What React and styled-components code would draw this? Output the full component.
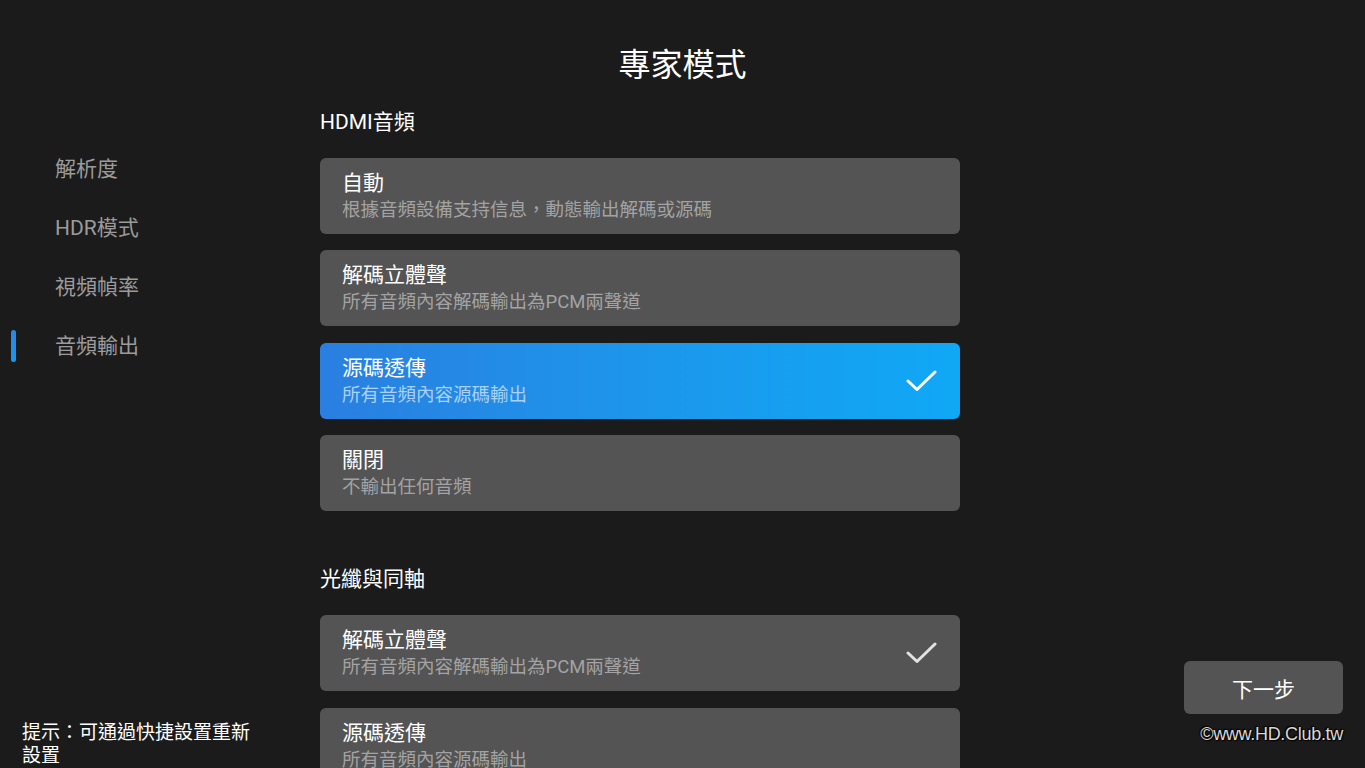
import React from "react";
import styled, { createGlobalStyle } from "styled-components";

const Global = createGlobalStyle`
  html, body { margin: 0; padding: 0; background: #1b1b1b; }
  body { font-family: Roboto, "Noto Sans CJK TC", "Noto Sans", sans-serif; }
  * { box-sizing: border-box; }
`;

const Page = styled.div`
  width: 1365px;
  height: 768px;
  overflow: hidden;
  background: #1b1b1b;
  display: flex;
  flex-direction: column;
  color: #fff;
`;

const Title = styled.h1`
  flex: none;
  margin: 0;
  padding-top: 44px;
  height: 86px;
  line-height: 42px;
  font-size: 32px;
  font-weight: 400;
  text-align: center;
  color: #fff;
`;

const Main = styled.div`
  flex: 1;
  min-height: 0;
  display: grid;
  grid-template-columns: 320px 640px 1fr;
  grid-template-rows: minmax(0, 1fr);
`;

const Sidebar = styled.nav`
  display: flex;
  flex-direction: column;
  padding-top: 54px;
  padding-bottom: 1px;
  min-height: 0;
`;

const NavItem = styled.div`
  position: relative;
  height: 59px;
  line-height: 59px;
  padding-left: 55px;
  font-size: 21px;
  color: #9b9b9b;
  &::before {
    content: "";
    display: ${(p) => (p.$active ? "block" : "none")};
    position: absolute;
    left: 11px;
    top: 13px;
    width: 5px;
    height: 32px;
    border-radius: 3px;
    background: linear-gradient(180deg, #2a86e6, #1598f0);
  }
`;

const Hint = styled.div`
  margin-top: auto;
  padding-left: 22px;
  width: 262px;
  font-size: 19px;
  line-height: 23px;
  color: #fff;
`;

const Content = styled.div`
  padding-top: 22px;
  display: flex;
  flex-direction: column;
  min-height: 0;
  overflow: hidden;
`;

const SectionHeader = styled.div`
  flex: none;
  height: 28px;
  line-height: 28px;
  font-size: 21px;
  color: #fff;
  margin-bottom: 22px;
  margin-top: ${(p) => (p.$gap ? "54px" : "0")};
`;

const CardList = styled.div`
  flex: none;
  display: flex;
  flex-direction: column;
  gap: 16.4px;
`;

const Card = styled.div`
  flex: none;
  height: 76px;
  border-radius: 6px;
  padding: 11px 22px 0 22px;
  display: flex;
  align-items: flex-start;
  justify-content: space-between;
  background: ${(p) =>
    p.$selected ? "linear-gradient(90deg, #2a7fe0 0%, #1b98ec 55%, #10a8f6 100%)" : "#545454"};
`;

const CardText = styled.div`
  display: flex;
  flex-direction: column;
`;

const CardTitle = styled.div`
  font-size: 21px;
  line-height: 28px;
  color: #fff;
`;

const CardSub = styled.div`
  font-size: 18.5px;
  line-height: 26px;
  color: ${(p) => (p.$selected ? "#a9d2f6" : "#a3a3a3")};
  white-space: nowrap;
`;

const Check = styled.svg`
  width: 31px;
  height: 22px;
  margin-top: 16px;
  margin-right: 1px;
  flex: none;
`;

const Right = styled.div`
  display: flex;
  flex-direction: column;
  justify-content: flex-end;
  align-items: flex-end;
  padding: 0 22px 24px 0;
  min-height: 0;
`;

const NextButton = styled.button`
  width: 159px;
  height: 53px;
  border: none;
  border-radius: 6px;
  background: #545454;
  color: #fff;
  font-family: inherit;
  font-size: 21px;
  margin-bottom: 10px;
`;

const Watermark = styled.div`
  font-family: "Liberation Sans", Arial, sans-serif;
  font-size: 18px;
  line-height: 20px;
  letter-spacing: -0.3px;
  color: #d8d8d8;
  text-shadow: 0 0 2px #000, 1px 1px 1px #000, -1px -1px 1px #000;
`;

const CheckIcon = ({ color }) => (
  <Check viewBox="0 0 31 22">
    <path d="M2 11 L11 19.5 L29 2" fill="none" stroke={color} strokeWidth="3" strokeLinecap="round" strokeLinejoin="round" />
  </Check>
);

const hdmi = [
  { t: "自動", s: "根據音頻設備支持信息，動態輸出解碼或源碼" },
  { t: "解碼立體聲", s: "所有音頻內容解碼輸出為PCM兩聲道" },
  { t: "源碼透傳", s: "所有音頻內容源碼輸出", selected: true, check: true },
  { t: "關閉", s: "不輸出任何音頻" },
];

const optical = [
  { t: "解碼立體聲", s: "所有音頻內容解碼輸出為PCM兩聲道", check: true },
  { t: "源碼透傳", s: "所有音頻內容源碼輸出" },
];

const nav = ["解析度", "HDR模式", "視頻幀率", "音頻輸出"];

function OptionCard({ item }) {
  return (
    <Card $selected={item.selected}>
      <CardText>
        <CardTitle>{item.t}</CardTitle>
        <CardSub $selected={item.selected}>{item.s}</CardSub>
      </CardText>
      {item.check && <CheckIcon color={item.selected ? "#ffffff" : "#e2e2e2"} />}
    </Card>
  );
}

export default function App() {
  return (
    <>
      <Global />
      <Page>
        <Title>專家模式</Title>
        <Main>
          <Sidebar>
            {nav.map((n, i) => (
              <NavItem key={n} $active={i === 3}>{n}</NavItem>
            ))}
            <Hint>提示：可通過快捷設置重新設置</Hint>
          </Sidebar>
          <Content>
            <SectionHeader>HDMI音頻</SectionHeader>
            <CardList>
              {hdmi.map((c) => (
                <OptionCard key={c.t} item={c} />
              ))}
            </CardList>
            <SectionHeader $gap>光纖與同軸</SectionHeader>
            <CardList>
              {optical.map((c) => (
                <OptionCard key={c.t} item={c} />
              ))}
            </CardList>
          </Content>
          <Right>
            <NextButton>下一步</NextButton>
            <Watermark>©www.HD.Club.tw</Watermark>
          </Right>
        </Main>
      </Page>
    </>
  );
}
